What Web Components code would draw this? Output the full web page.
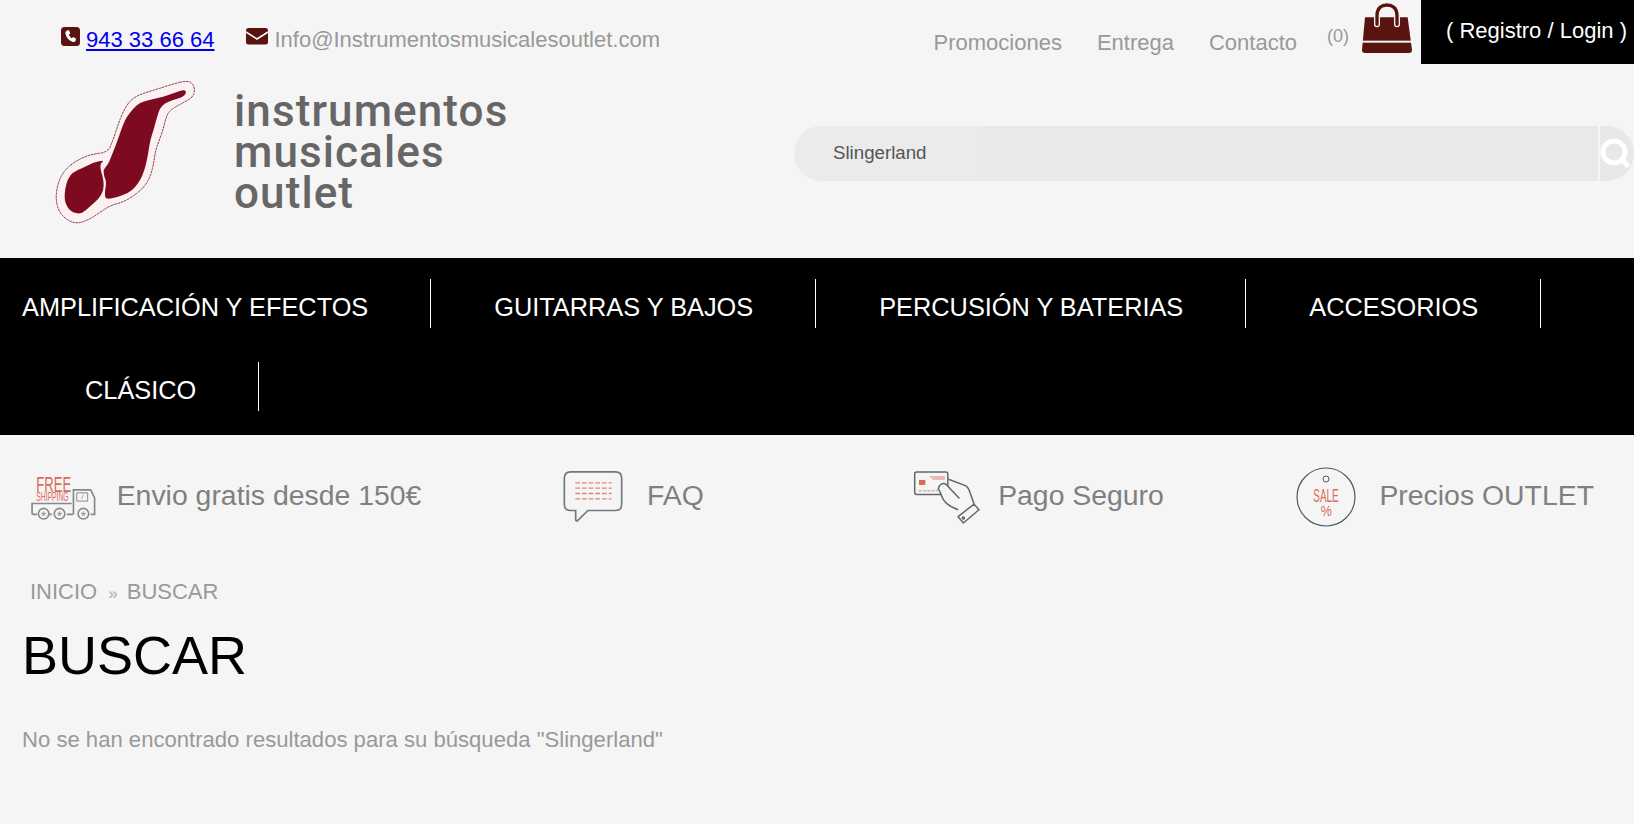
<!DOCTYPE html>
<html lang="es">
<head>
<meta charset="utf-8">
<title>Instrumentos Musicales Outlet</title>
<style>
  html, body { margin: 0; background: #f5f5f5; font-family: 'Liberation Sans', Arial, sans-serif; }
</style>
</head>
<body>
<site-header></site-header>
<main-nav>
  <nav-item first>AMPLIFICACIÓN Y EFECTOS</nav-item>
  <nav-item>GUITARRAS Y BAJOS</nav-item>
  <nav-item>PERCUSIÓN Y BATERIAS</nav-item>
  <nav-item>ACCESORIOS</nav-item>
  <nav-item>CLÁSICO</nav-item>
</main-nav>
<feature-strip></feature-strip>
<search-results query="Slingerland"></search-results>

<script>
const headerTemplate = document.createElement('template')
headerTemplate.innerHTML = `
  <style>
    :host { display: block; height: 258px; color: #999; font-size: 22px; }
    a { color: inherit; text-decoration: none; }
    #top { display: flex; justify-content: space-between; height: 64px; }
    #contact { display: flex; padding: 27px 0 0 61px; gap: 32px; }
    #contact div { display: flex; gap: 6px; }
    #contact svg { display: block; }
    #contact a { line-height: 25px; }
    #contact .phone { color: #00e; text-decoration: underline; }
    #links { display: flex; }
    #links a { padding: 29px 0 0 35px; line-height: 27px; }
    #count { font-size: 18px; padding: 24px 0 0 30px; line-height: 24px; }
    #bag { margin: 3px 9px 0 13px; }
    #links #account { width: 213px; height: 64px; background: #000; color: #fff; box-sizing: border-box; padding: 18px 0 0 25px; line-height: 25px; white-space: pre; }
    #brand { display: flex; height: 194px; }
    #logo { margin: 6px 0 0 40px; flex: none; }
    #name { margin: 27px 0 0 24px; font: 500 44px/41px Roboto, sans-serif; letter-spacing: 1.1px; color: #666; }
    #search { display: flex; width: 840px; height: 55px; margin: 62px 0 0 auto; }
    #field { flex: 1; border-radius: 28px 0 0 28px; margin-right: 2px; padding-left: 39px; font-size: 18.7px; line-height: 53px; color: #555;
      background: linear-gradient(90deg, #ebebeb 189px, #e9e9e9 189px); }
    #go { width: 34px; background: #e8e8e8; border-radius: 0 28px 28px 0; }
    #go svg { display: block; margin-top: 12px; }
  </style>
  <div id="top">
    <div id="contact">
      <div>
        <svg width="19" height="19" viewBox="0 0 19 19"><rect width="19" height="19" rx="3.5" fill="#5a1410"/><path d="M6 3.6 8 3.2 9.3 6.4 7.9 7.6C8.3 9 9.4 10.4 10.8 11.2L12.2 10 15 11.8 14.5 13.9C13.9 15 12.6 15.3 11.3 14.8 7.800 13.400 5.300 10.600 4.500 7 4.200 5.500 4.800 4.300 6 3.600Z" fill="#fff"/></svg>
        <a class="phone" href="#">943 33 66 64</a>
      </div>
      <div>
        <svg width="22" height="19" viewBox="0 0 22 19"><rect y="1" width="22" height="16.500" rx="2.500" fill="#5a1410"/><path d="M0 5 11 12 22 5" fill="none" stroke="#fff" stroke-width="1.600"/></svg>
        <a href="#">Info@Instrumentosmusicalesoutlet.com</a>
      </div>
    </div>
    <div id="links">
      <a href="#">Promociones</a>
      <a href="#">Entrega</a>
      <a href="#">Contacto</a>
      <span id="count">(0)</span>
      <svg id="bag" width="50" height="50" viewBox="0 0 150 150">
        <path d="M9 43H137L150 141Q150 150 141 150H9Q0 150 0 141Z" fill="#5a1410"/>
        <rect x="0" y="113" width="150" height="6" fill="#f5f5f5"/>
        <path d="M45 64V38C45 14 60 6 75 6S105 14 105 38V64" fill="none" stroke="#f5f5f5" stroke-width="18" stroke-linecap="round"/>
        <path d="M45 64V38C45 14 60 6 75 6S105 14 105 38V64" fill="none" stroke="#5a1410" stroke-width="10" stroke-linecap="round"/>
      </svg>
      <a id="account" href="#">( Registro / Login )</a>
    </div>
  </div>
  <div id="brand">
    <svg id="logo" width="170" height="160" viewBox="0 0 510 480">
      <path data-pts="440,32 458,40 465,60 458,82 430,98 405,111 385,126 376,150 369,180 356,215 346,245 341,280 332,318 312,352 282,377 250,396 210,407 180,427 150,447 115,461 85,453 58,428 47,390 52,345 68,308 98,278 150,253 204,247 219,210 234,165 247,130 268,93 299,73 350,58 395,43" fill="#fbf0f2" stroke="#8a3d4c" stroke-width="3" stroke-dasharray="8 2"/>
      <path data-pts="434,58 440,70 427,82 396,91 373,101 359,116 353,136 346,160 339,185 331,210 326,240 321,270 313,302 302,328 286,352 266,368 235,381 197,389 194,370 197,350 199,335 192,318 190,298 204,284 212,264 224,234 237,199 249,164 261,139 279,117 299,98 330,90 370,80 405,68" fill="#7e0a20"/>
      <path data-pts="194,270 180,282 183,305 191,330 191,362 176,387 151,408 125,432 98,428 83,414 73,390 75,358 83,328 98,307 129,293 160,278" fill="#7e0a20"/>
    </svg>
    <div id="name">instrumentos<br>musicales<br>outlet</div>
    <div id="search">
      <div id="field">Slingerland</div>
      <div id="go"><svg width="34" height="34" viewBox="0 0 34 34"><circle cx="14" cy="14" r="11" fill="none" stroke="#fff" stroke-width="5"/><path d="M22 22 27 27" stroke="#fff" stroke-width="5" stroke-linecap="round"/></svg></div>
    </div>
  </div>
`

// rounds a list of outline points into a smooth closed path
function smoothPath (pts) {
  const p = pts.split(' ').map(s => s.split(',').map(Number))
  const mid = (a, b) => [(a[0] + b[0]) / 2, (a[1] + b[1]) / 2]
  let d = 'M' + mid(p[p.length - 1], p[0]).join(' ')
  p.forEach((pt, i) => {
    d += 'Q' + pt.join(' ') + ' ' + mid(pt, p[(i + 1) % p.length]).join(' ')
  })
  return d + 'Z'
}

customElements.define('site-header',
  class extends HTMLElement {
    constructor () {
      super()
      this.attachShadow({ mode: 'open' })
        .appendChild(headerTemplate.content.cloneNode(true))
      for (const blob of this.shadowRoot.querySelectorAll('[data-pts]')) {
        blob.setAttribute('d', smoothPath(blob.dataset.pts))
      }
    }
  }
)

customElements.define('main-nav',
  class extends HTMLElement {
    constructor () {
      super()
      this.attachShadow({ mode: 'open' }).innerHTML = `
        <style>
          :host { display: block; background: #000; }
          nav { display: flex; flex-wrap: wrap; row-gap: 34px; padding: 21px 0 24px 22px; }
        </style>
        <nav><slot></slot></nav>
      `
    }
  }
)

customElements.define('nav-item',
  class extends HTMLElement {
    constructor () {
      super()
      this.attachShadow({ mode: 'open' }).innerHTML = `
        <style>
          :host { display: block; padding: 0 62px 0 63px; border-right: 1px solid #fff; color: #fff; font-size: 25.33px; height: 49px; line-height: 57px; white-space: nowrap; }
          :host([first]) { padding-left: 0; }
        </style>
        <slot></slot>
      `
    }
  }
)

const STAR = 'm0-9 2.600 5.800 6.300.700-4.700 4.200 1.300 6.200-5.500-3.200-5.500 3.200 1.300-6.200-4.700-4.200 6.300-.700Z'

const stripTemplate = document.createElement('template')
stripTemplate.innerHTML = `
  <style>
    :host { display: block; height: 120px; }
    #row { display: grid; grid-template-columns: 407px 407px 407px 1fr; padding-left: 22px; justify-items: center; align-items: center; height: 120px; }
    feature-item:last-child { justify-self: end; margin-right: 40px; }
    svg { display: block; margin-top: 3px; overflow: visible; }
    text { font-family: 'Liberation Sans', sans-serif; fill: #d9695a; }
  </style>
  <div id="row">
    <feature-item label="Envio gratis desde 150€" style="--gap: 20px">
      <svg width="67" height="48" viewBox="30 65 200 145" fill="none" stroke="#85898b" stroke-width="5">
        <text transform="translate(48 122) scale(.58 1)" font-size="68" stroke="none">FREE</text>
        <text transform="translate(48 151) scale(.55 1)" font-size="37" stroke="none">SHIPPING</text>
        <path d="M50 190H38Q35 190 35 186V157H155M95 190H88M158 190H140M212 190H224V140L212 116H160V190"/>
        <path d="M170 125H203V150H170Z" stroke-width="3"/>
        <path d="M190 130 184 145" stroke="#d9695a" stroke-width="2"/>
        <circle cx="70" cy="188" r="16"/><circle cx="118" cy="188" r="16"/><circle cx="190" cy="188" r="16"/>
        <path d="M70 188${STAR}M118 188${STAR}M190 188${STAR}" fill="#a3a7a8" stroke="none"/>
      </svg>
    </feature-item>
    <feature-item label="FAQ" style="--gap: 24px; margin-left: 2px">
      <svg width="60" height="53" viewBox="40 33 180 158" fill="none">
        <path d="M63 38H197Q216 38 216 57V135Q216 154 197 154H115L84 184Q78 188 78 180V154H63Q44 154 44 135V57Q44 38 63 38Z" stroke="#70787b" stroke-width="5"/>
        <path d="M77 71H186M77 87H186M77 103H186M77 119H186" stroke="#e08878" stroke-width="4" stroke-dasharray="14 6"/>
      </svg>
    </feature-item>
    <feature-item label="Pago Seguro" style="--gap: 18px; margin-right: 2px">
      <svg width="67" height="53" viewBox="38 30 202 160" fill="none" stroke="#5f686b" stroke-width="4.500" stroke-linejoin="round">
        <rect x="43" y="36" width="100" height="68" rx="6"/>
        <rect x="56" y="60" width="19" height="15" fill="#d9695a" stroke="none"/>
        <path d="M88 51H134M96 57H134" stroke="#d9695a" stroke-width="2.500"/>
        <path d="M55 93H112" stroke="#e08878" stroke-width="3" stroke-dasharray="10 3"/>
        <path d="M145 58 198 78Q206 84 210 98L222 132"/>
        <path d="M174 150C150 142 130 128 124 108Q118 90 114 88C116 74 128 66 138 74L178 116" fill="#f5f5f5"/>
        <path d="M222 133 237 150 190 190 174 171Z" fill="#f5f5f5"/>
        <circle cx="190" cy="175" r="3" fill="#5f686b"/>
      </svg>
    </feature-item>
    <feature-item label="Precios OUTLET" style="--gap: 23px">
      <svg width="60" height="60" viewBox="33 20 180 180" fill="none">
        <circle cx="123" cy="110" r="87" stroke="#4f585b" stroke-width="3.500"/>
        <circle cx="123" cy="56" r="9" stroke="#4f585b" stroke-width="3"/>
        <text transform="translate(85 126) scale(.53 1)" font-size="56">SALE</text>
        <text transform="translate(107 168) scale(.85 1)" font-size="44">%</text>
      </svg>
    </feature-item>
  </div>
`

customElements.define('feature-strip',
  class extends HTMLElement {
    constructor () {
      super()
      this.attachShadow({ mode: 'open' })
        .appendChild(stripTemplate.content.cloneNode(true))
    }
  }
)

customElements.define('feature-item',
  class extends HTMLElement {
    constructor () {
      super()
      this.attachShadow({ mode: 'open' }).innerHTML = `
        <style>
          :host { display: flex; align-items: center; gap: var(--gap, 21px); color: #808080; font-size: 28.4px; white-space: nowrap; }
        </style>
        <slot></slot><span></span>
      `
      this.shadowRoot.querySelector('span').textContent = this.getAttribute('label')
    }
  }
)

customElements.define('search-results',
  class extends HTMLElement {
    constructor () {
      super()
      this.attachShadow({ mode: 'open' }).innerHTML = `
        <style>
          :host { display: block; padding-left: 22px; color: #999; }
          ol { display: flex; margin: 0; padding: 23px 0 0 8px; list-style: none; font-size: 22px; line-height: 28px; }
          li + li::before { content: '»'; font-size: 17px; padding: 0 9px 0 11px; color: #aaa; }
          h1 { margin: 12px 0 0; font-size: 54px; font-weight: 400; line-height: 70px; color: #000; }
          p { margin: 35px 0 0; font-size: 22.100px; line-height: 30px; }
        </style>
        <ol><li>INICIO</li><li>BUSCAR</li></ol>
        <h1>BUSCAR</h1>
        <p></p>
      `
      this.shadowRoot.querySelector('p').textContent =
        'No se han encontrado resultados para su búsqueda "' + this.getAttribute('query') + '"'
    }
  }
)
</script>
</body>
</html>
